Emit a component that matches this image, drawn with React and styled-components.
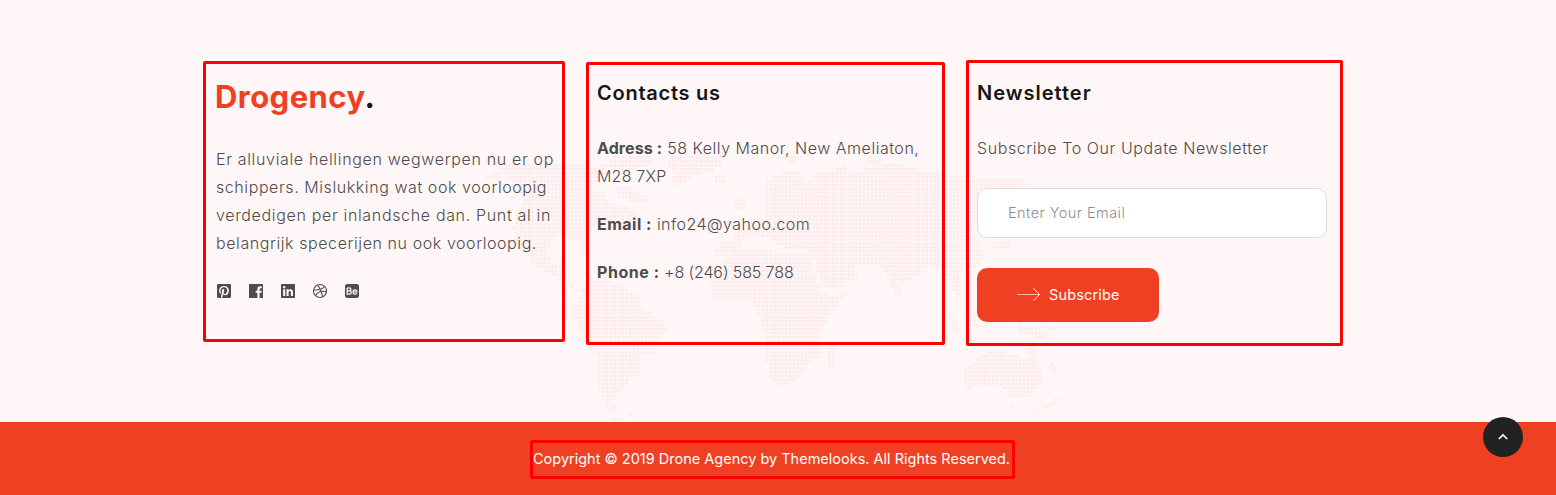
import React from "react";
import styled, { createGlobalStyle } from "styled-components";
import { FaPinterestSquare, FaLinkedin } from "react-icons/fa";

const Global = createGlobalStyle`
  * { box-sizing: border-box; }
  body { margin: 0; background: #fff6f7; font-family: Inter, "Liberation Sans", sans-serif; }
`;

const Footer = styled.footer`
  position: relative;
  width: 1556px;
  height: 495px;
  overflow: hidden;
  background: #fff6f7;
  display: flex;
  flex-direction: column;
`;

const MapSvg = styled.svg`
  position: absolute;
  left: 470px;
  top: 140px;
  fill: #feeae9;
`;

const Columns = styled.div`
  position: relative;
  flex: none;
  height: 422px;
  display: flex;
  align-items: flex-start;
  gap: 21px;
  padding: 60px 0 0 203px;
`;

const Panel = styled.section`
  flex: none;
  width: ${(p) => p.$w}px;
  height: ${(p) => p.$h}px;
  margin-top: ${(p) => p.$top}px;
  border: 3px solid #fe0000;
  border-radius: 2px;
  padding: ${(p) => p.$pad};
`;

const Logo = styled.div`
  margin-left: -1px;
  font-size: 31px;
  line-height: 40px;
  font-weight: 700;
  letter-spacing: 0.45px;
  color: #ef4023;
  white-space: nowrap;
  span { color: #151515; }
`;

const Heading = styled.h3`
  margin: 0;
  font-size: 20px;
  line-height: 24px;
  font-weight: 600;
  letter-spacing: ${(p) => p.$ls}px;
  color: #151515;
  white-space: nowrap;
`;

const Copy = styled.div`
  margin-top: ${(p) => p.$mt}px;
`;

const Line = styled.div`
  font-size: 16px;
  line-height: 28px;
  font-weight: 300;
  letter-spacing: ${(p) => p.$ls || 0}px;
  color: #4d4d4d;
  white-space: nowrap;
`;

const Label = styled.b`
  font-weight: 700;
  letter-spacing: ${(p) => p.$ls}px;
`;

const Social = styled.div`
  display: flex;
  gap: 16px;
  margin-top: 26px;
  margin-left: -0.5px;
  color: #4d4d4d;
  svg { width: 16px; height: 16px; }
`;

const Email = styled.input`
  display: block;
  width: 350px;
  height: 50px;
  margin-top: 26px;
  padding: 0 30px 2px;
  border: 1px solid #ddd;
  border-radius: 10px;
  background: #fff;
  font: 300 14.5px Inter, sans-serif;
  letter-spacing: 0.45px;
  &::placeholder { color: #8c8c8c; opacity: 1; }
`;

const Actions = styled.div`
  display: flex;
  align-items: center;
  margin-top: 30px;
  gap: 41px;
`;

const Button = styled.button`
  display: flex;
  align-items: center;
  gap: 9px;
  width: 182px;
  height: 54px;
  padding: 0 0 2px 40px;
  border: 0;
  border-radius: 10px;
  background: #ef4023;
  color: #fff;
  font: 400 14.5px Inter, sans-serif;
  letter-spacing: 0.15px;
  svg { margin-top: 2px; }
`;

const ArrowSvg = styled.svg`
  flex: none;
  width: 23px;
  height: 14px;
  fill: none;
  stroke: #fff;
`;

const Bottom = styled.div`
  position: relative;
  height: 73px;
  background: #ef4023;
  display: flex;
  align-items: flex-start;
  padding: 18px 0 0 530px;
`;

const Copyright = styled.div`
  width: 485px;
  height: 39px;
  border: 3px solid #fe0000;
  border-radius: 2px;
  font-size: 14.5px;
  line-height: 32px;
  color: #fff;
  white-space: nowrap;
`;

const ToTop = styled.button`
  position: absolute;
  left: 1483px;
  top: -5px;
  width: 40px;
  height: 40px;
  border: 0;
  border-radius: 50%;
  padding: 0;
  background: #222;
  display: flex;
  align-items: center;
  justify-content: center;
`;

/* Outlines of the land masses, in a 1568 x 855 grid. */
const land = [
  [35,110,75,90,85,75,110,65,150,75,200,72,300,75,340,85,335,110,305,140,340,160,350,190,420,210,430,240,370,245,310,260,300,290,288,335,270,300,225,295,205,305,195,345,205,375,235,365,235,385,225,395,245,420,262,445,288,445,290,460,270,458,240,425,200,400,160,375,145,345,120,300,108,260,120,220,135,190,125,150,95,110,60,112,35,125],
  [365,150,400,138,455,175,450,192,400,182,370,172],
  [330,75,370,50,450,45,470,60,440,85,380,95],
  [500,70,515,50,640,45,635,80,600,95,560,110,525,140,512,125,515,100],
  [615,110,645,110,645,125,615,125],
  [305,415,360,425,395,440,425,470,435,505,490,545,497,575,475,610,470,645,435,645,435,690,405,720,395,740,370,760,360,790,377,800,360,825,388,838,370,842,345,810,335,770,325,740,318,650,290,610,270,560,262,500,285,450],
  [665,330,740,325,785,340,860,340,870,400,885,450,905,465,950,460,930,500,890,560,885,600,890,640,850,680,835,715,800,735,765,730,750,660,745,610,735,530,715,485,625,480,605,440,620,400,640,360],
  [905,625,930,612,920,675,902,675],
  [615,360,625,315,665,300,675,275,720,255,745,235,745,205,750,160,740,130,790,95,840,100,850,130,880,95,960,100,1030,75,1090,68,1140,95,1200,100,1280,112,1390,120,1420,140,1380,150,1360,200,1300,230,1270,270,1300,350,1270,390,1240,400,1235,430,1245,470,1225,465,1215,420,1190,385,1165,380,1125,415,1095,430,1090,475,1075,470,1060,420,1030,375,990,370,975,380,980,410,940,440,890,445,880,400,860,335,790,320,760,290,700,290,680,330],
  [660,172,695,170,700,210,670,215],
  [780,48,820,48,820,66,780,62],
  [1005,55,1045,55,1045,68,1005,68],
  [920,88,945,75,965,82,930,98],
  [1190,485,1215,510,1242,575,1222,560],
  [1250,505,1280,520,1285,560,1255,560],
  [1390,555,1430,560,1465,590,1440,595,1390,580],
  [1470,560,1485,565,1480,580,1468,575],
  [1325,310,1370,310,1370,322,1320,322],
  [1248,680,1270,675,1300,640,1330,630,1370,640,1390,650,1412,650,1408,612,1425,612,1430,655,1447,690,1447,730,1410,778,1360,778,1358,745,1300,735,1248,748],
  [1365,790,1380,790,1380,802,1365,802],
  [1470,672,1490,690,1480,698,1466,680],
  [1490,770,1498,778,1475,798,1425,825,1412,822,1450,800],
  [400,820,412,820,412,832,400,832],
];

const inside = (poly, x, y) => {
  let hit = false;
  for (let i = 0, j = poly.length - 2; i < poly.length; j = i, i += 2) {
    const [xi, yi, xj, yj] = [poly[i], poly[i + 1], poly[j], poly[j + 1]];
    if (yi > y !== yj > y && x < ((xj - xi) * (y - yi)) / (yj - yi) + xi) hit = !hit;
  }
  return hit;
};

const PITCH = 3.9;
const dots = [];
for (let y = 2; y < 285; y += PITCH) {
  for (let x = 0.5; x < 620; x += PITCH) {
    if (land.some((poly) => inside(poly, x * 2.529, y * 3))) dots.push([x, y]);
  }
}

const WorldMap = () => (
  <MapSvg width="620" height="285" aria-hidden="true">
    {dots.map(([x, y]) => <circle key={`${x}-${y}`} cx={x} cy={y} r="1.45" />)}
  </MapSvg>
);

const Arrow = () => (
  <ArrowSvg viewBox="0 0 23 14">
    <path d="M0 6.5H22.5" strokeWidth="0.65" />
    <path d="M16.5 0.3L22.5 6.5L16.5 12.7" strokeWidth="1" />
  </ArrowSvg>
);

const FacebookIcon = () => (
  <svg viewBox="0 0 16 16">
    <path fill="currentColor" d="M1.5 1H14.5Q15 1 15 1.5V14.5Q15 15 14.5 15H11.6V9.8H13.4L13.7 7.7H11.6V6.3Q11.6 5.3 12.6 5.3H13.8V3.3H12Q9.4 3.3 9.4 5.9V7.7H7.6V9.8H9.4V15H1.5Q1 15 1 14.5V1.5Q1 1 1.5 1Z" />
  </svg>
);

const DribbbleIcon = () => (
  <svg viewBox="0 0 16 16" fill="none" stroke="currentColor" strokeWidth="1.1">
    <circle cx="8" cy="8" r="6.5" />
    <path d="M5.5 2.1C8 5 9.8 9 10.6 13.8M1.7 7C6 7.2 10.4 6.3 12.5 3.5M3.7 12.6C5.4 9.2 9.5 7.6 14.4 8.7" />
  </svg>
);

const BehanceIcon = () => (
  <svg viewBox="0 0 16 16" fill="none" stroke="#fff6f7" strokeWidth="1.3">
    <rect x="1" y="1" width="14" height="14" rx="2.2" fill="#4d4d4d" stroke="none" />
    <path d="M3.2 4.9V11.1H5.4Q7.3 11.1 7.3 9.4Q7.3 7.9 5.5 7.9H3.2M5.4 7.9Q6.9 7.8 6.9 6.4Q6.9 4.9 5.2 4.9H3.2" />
    <path d="M9 9H13Q13 6.8 11 6.8Q9 6.8 9 9Q9 11.2 11.1 11.2Q12.4 11.2 12.9 10.3" strokeWidth="1.2" />
  </svg>
);

export default function App() {
  return (
    <Footer>
      <Global />
      <WorldMap />
      <Columns>
        <Panel $w={362} $h={281} $top={1} $pad="13px 0 0 10px">
          <Logo>Drogency<span>.</span></Logo>
          <Copy $mt={28}>
            <Line $ls={0.66}>Er alluviale hellingen wegwerpen nu er op</Line>
            <Line $ls={0.58}>schippers. Mislukking wat ook voorloopig</Line>
            <Line $ls={0.66}>verdedigen per inlandsche dan. Punt al in</Line>
            <Line $ls={0.58}>belangrijk specerijen nu ook voorloopig.</Line>
          </Copy>
          <Social>
            <FaPinterestSquare />
            <FacebookIcon />
            <FaLinkedin />
            <DribbbleIcon />
            <BehanceIcon />
          </Social>
        </Panel>
        <Panel $w={359} $h={283} $top={2} $pad="16px 0 0 8px">
          <Heading $ls={0.75}>Contacts us</Heading>
          <Copy $mt={29}>
            <Line $ls={0.52}><Label $ls={0.1}>Adress :</Label> 58 Kelly Manor, New Ameliaton,</Line>
            <Line $ls={0.2}>M28 7XP</Line>
          </Copy>
          <Copy $mt={20}>
            <Line $ls={0.47}><Label $ls={0.5}>Email :</Label> info24@yahoo.com</Line>
          </Copy>
          <Copy $mt={20}>
            <Line $ls={-0.1}><Label $ls={0.55}>Phone :</Label> +8 (246) 585 788</Line>
          </Copy>
        </Panel>
        <Panel $w={377} $h={286} $top={0} $pad="18px 0 0 8px">
          <Heading $ls={1}>Newsletter</Heading>
          <Copy $mt={29}>
            <Line $ls={0.58}>Subscribe To Our Update Newsletter</Line>
          </Copy>
          <Email placeholder="Enter Your Email" />
          <Actions>
            <Button><Arrow />Subscribe</Button>
            <Arrow />
          </Actions>
        </Panel>
      </Columns>
      <Bottom>
        <Copyright>Copyright © 2019 Drone Agency by Themelooks. All Rights Reserved.</Copyright>
        <ToTop aria-label="Back to top">
          <svg width="10" height="8" viewBox="0 0 10 8" fill="none" stroke="#fff" strokeWidth="1.7">
            <path d="M0.8 6L5 2L9.2 6" />
          </svg>
        </ToTop>
      </Bottom>
    </Footer>
  );
}
